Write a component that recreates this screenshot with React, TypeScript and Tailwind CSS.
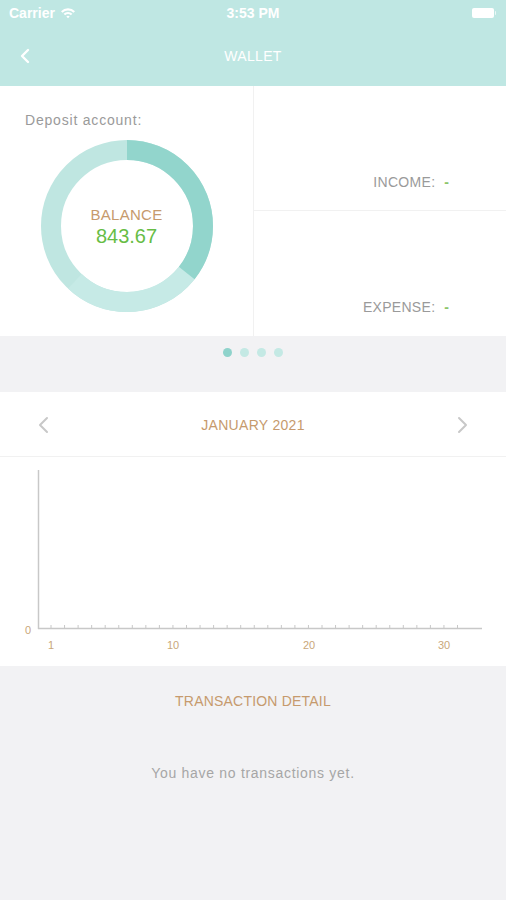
import React from "react";

const font = { fontFamily: '"Liberation Sans", Arial, sans-serif' };

function Ring() {
  const cx = 86, cy = 86, r = 76;
  const c = 2 * Math.PI * r;
  const darkFrac = 128 / 360;
  return (
    <svg width="172" height="172" viewBox="0 0 172 172">
      <circle cx={cx} cy={cy} r={r} fill="none" stroke="#bfe6e1" strokeWidth="20" />
      <circle
        cx={cx}
        cy={cy}
        r={r}
        fill="none"
        stroke="#c6eae6"
        strokeWidth="20"
        strokeDasharray={`${c * (95 / 360)} ${c}`}
        strokeDashoffset={-c * darkFrac}
        transform={`rotate(-90 ${cx} ${cy})`}
      />
      <circle
        cx={cx}
        cy={cy}
        r={r}
        fill="none"
        stroke="#92d5cc"
        strokeWidth="20"
        strokeDasharray={`${c * darkFrac} ${c}`}
        transform={`rotate(-90 ${cx} ${cy})`}
      />
    </svg>
  );
}

function Chart() {
  const ticks = Array.from({ length: 31 }, (_, i) => 51 + i * 13.55);
  const labels: [string, number][] = [
    ["1", 51],
    ["10", 173],
    ["20", 309],
    ["30", 444],
  ];
  return (
    <svg width="506" height="209" viewBox="0 0 506 209">
      <line x1="38.5" y1="13" x2="38.5" y2="172" stroke="#c8c8c8" strokeWidth="1.5" />
      <line x1="38" y1="171.5" x2="482" y2="171.5" stroke="#c8c8c8" strokeWidth="1.5" />
      {ticks.map((x, i) => (
        <line key={i} x1={x} y1="168" x2={x} y2="171" stroke="#c8c8c8" strokeWidth="1" />
      ))}
      <text x="28" y="177" fontSize="11" fill="#c9a77a" textAnchor="middle" style={font}>
        0
      </text>
      {labels.map(([t, x]) => (
        <text key={t} x={x} y="192" fontSize="11" fill="#c9a77a" textAnchor="middle" style={font}>
          {t}
        </text>
      ))}
    </svg>
  );
}

export default function App() {
  return (
    <div className="w-[506px] h-[900px] bg-[#f2f2f4] flex flex-col overflow-hidden" style={font}>
      {/* Header */}
      <div className="bg-[#bfe7e3] h-[86px] flex flex-col">
        <div className="h-[26px] flex items-center justify-between px-[9px] relative">
          <div className="flex items-center gap-[5px] text-white text-[14px] font-semibold">
            <span>Carrier</span>
            <svg width="16" height="12" viewBox="0 0 16 12">
              <path d="M1 4.2 A10 10 0 0 1 15 4.2 L13.5 5.7 A8 8 0 0 0 2.5 5.7 Z" fill="white" />
              <path d="M3.6 6.8 A6.3 6.3 0 0 1 12.4 6.8 L10.9 8.3 A4.3 4.3 0 0 0 5.1 8.3 Z" fill="white" />
              <path d="M6.3 9.5 A2.5 2.5 0 0 1 9.7 9.5 L8 11.3 Z" fill="white" />
            </svg>
          </div>
          <div className="absolute left-0 right-0 text-center text-white text-[14px] font-semibold pointer-events-none">
            3:53 PM
          </div>
          <div className="flex items-center mr-[1px]">
            <div className="w-[22px] h-[10px] bg-white rounded-[2px]" />
            <div className="w-[1.5px] h-[4px] bg-white/70 rounded-r ml-[1px]" />
          </div>
        </div>
        <div className="flex-1 flex items-center relative">
          <svg className="absolute left-[19px]" width="12" height="16" viewBox="0 0 12 16">
            <path d="M9 2 L3 8 L9 14" fill="none" stroke="white" strokeWidth="2.4" strokeLinecap="round" strokeLinejoin="round" />
          </svg>
          <div className="w-full text-center text-white text-[14px] tracking-[0.3px]">WALLET</div>
        </div>
      </div>

      {/* Top card */}
      <div className="bg-white h-[250px] flex">
        <div className="w-[254px] flex flex-col border-r border-[#f1f1f1]">
          <div className="pl-[25px] pt-[26px] text-[14px] tracking-[0.8px] text-[#9a9a9a] leading-[16px]">Deposit account:</div>
          <div className="flex justify-center mt-[12px]">
            <div className="relative w-[172px] h-[172px]">
              <Ring />
              <div className="absolute inset-0 flex flex-col items-center justify-center pt-[2px]">
                <div className="text-[15px] tracking-[0.3px] text-[#c69a6d] leading-[18px]">BALANCE</div>
                <div className="text-[20px] text-[#67bd45] leading-[24px]">843.67</div>
              </div>
            </div>
          </div>
        </div>
        <div className="flex-1 flex flex-col">
          <div className="h-[125px] border-b border-[#f1f1f1] flex items-end justify-end pr-[57px] pb-[17px]">
            <span className="text-[14px] tracking-[0.3px] text-[#9a9a9a]">INCOME:</span>
            <span className="text-[14px] font-bold text-[#8cc56a] ml-[9px]">-</span>
          </div>
          <div className="flex-1 flex items-end justify-end pr-[57px] pb-[18px]">
            <span className="text-[14px] tracking-[0.3px] text-[#9a9a9a]">EXPENSE:</span>
            <span className="text-[14px] font-bold text-[#8cc56a] ml-[9px]">-</span>
          </div>
        </div>
      </div>

      {/* Dots */}
      <div className="h-[56px] flex justify-center pt-[12px] gap-[8px]">
        <div className="w-[9px] h-[9px] rounded-full bg-[#8fd3cb]" />
        <div className="w-[9px] h-[9px] rounded-full bg-[#c4e9e4]" />
        <div className="w-[9px] h-[9px] rounded-full bg-[#c4e9e4]" />
        <div className="w-[9px] h-[9px] rounded-full bg-[#c4e9e4]" />
      </div>

      {/* Month row */}
      <div className="bg-white h-[65px] border-b border-[#f1f1f1] flex items-center justify-between px-[37px] pt-[2px]">
        <svg width="12" height="18" viewBox="0 0 12 18">
          <path d="M10 2 L3 9 L10 16" fill="none" stroke="#c8c8c8" strokeWidth="2" strokeLinecap="round" strokeLinejoin="round" />
        </svg>
        <div className="text-[14px] text-[#c69a6d] tracking-[0.3px]">JANUARY 2021</div>
        <svg width="12" height="18" viewBox="0 0 12 18">
          <path d="M2 2 L9 9 L2 16" fill="none" stroke="#c8c8c8" strokeWidth="2" strokeLinecap="round" strokeLinejoin="round" />
        </svg>
      </div>

      {/* Chart */}
      <div className="bg-white h-[209px]">
        <Chart />
      </div>

      {/* Transaction detail */}
      <div className="flex flex-col items-center">
        <div className="mt-[26px] text-[14px] text-[#c69a6d] tracking-[0.2px] leading-[18px]">TRANSACTION DETAIL</div>
        <div className="mt-[54px] text-[14px] tracking-[0.7px] text-[#a6a6a6] leading-[18px]">You have no transactions yet.</div>
      </div>
    </div>
  );
}
